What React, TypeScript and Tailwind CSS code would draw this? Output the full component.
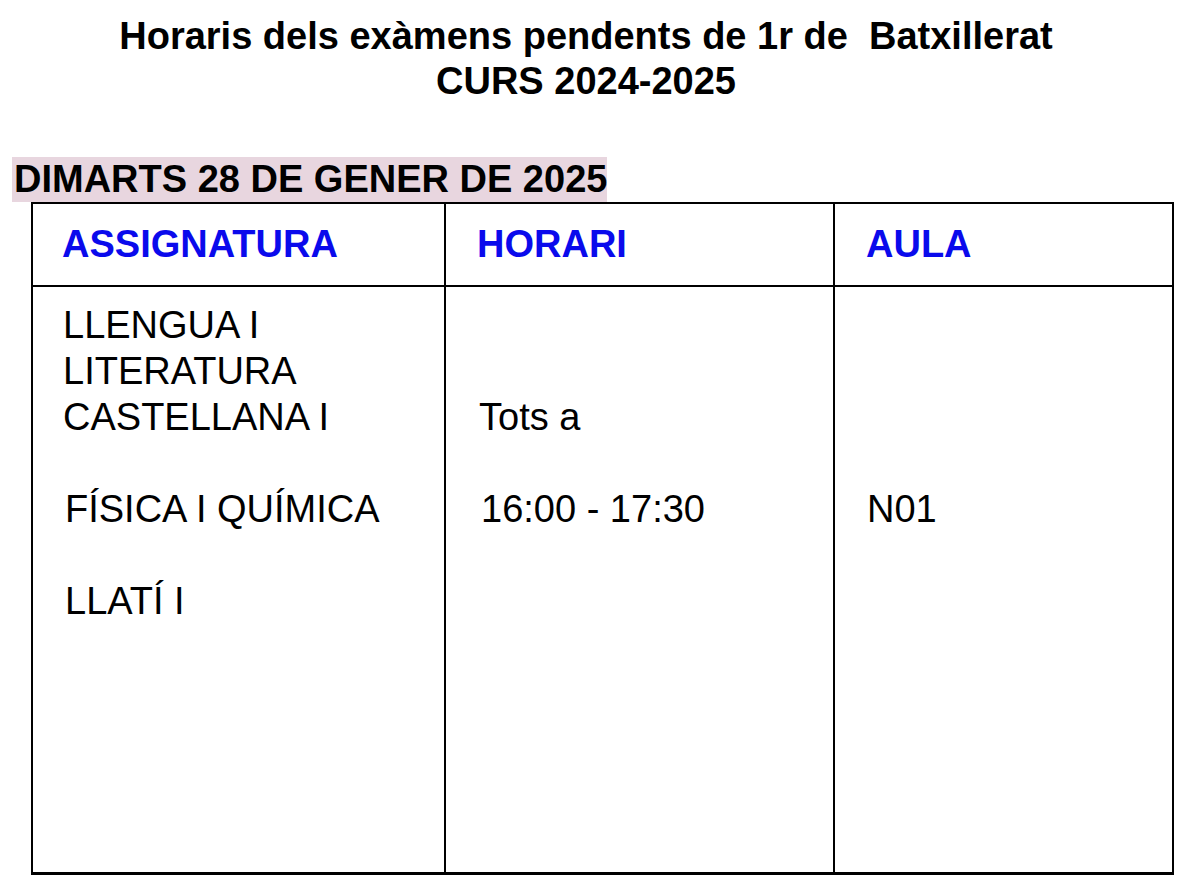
import React from "react";

export default function App() {
  const font = { fontFamily: '"Liberation Sans", Arial, sans-serif' };
  return (
    <div className="w-[1200px] h-[892px] bg-white text-black overflow-hidden" style={font}>
      <div className="w-[1172px] pt-[14px] text-center font-bold text-[38px] leading-[45px] whitespace-pre">
        <p>Horaris dels exàmens pendents de 1r de  Batxillerat</p>
        <p>CURS 2024-2025</p>
      </div>
      <div className="mt-[53px] pl-[12px] flex">
        <span className="bg-[#e8d6df] pl-[2px] font-bold text-[38px] leading-[45px]">
          DIMARTS 28 DE GENER DE 2025
        </span>
      </div>
      <div className="ml-[31px] w-[1143px] border-2 border-b-[3px] border-black">
        <div className="grid grid-cols-[411px_2px_387px_2px_1fr] h-[83px] border-b-2 border-black text-[#0a0aec] font-bold text-[38px]">
          <div className="flex items-center pl-[29px]">ASSIGNATURA</div>
          <div className="bg-black" />
          <div className="flex items-center pl-[31px]">HORARI</div>
          <div className="bg-black" />
          <div className="flex items-center pl-[31px]">AULA</div>
        </div>
        <div className="grid grid-cols-[411px_2px_387px_2px_1fr] h-[585px] text-[38px] leading-[46px]">
          <div className="pt-[15px] pl-[30px]">
            <p>LLENGUA I</p>
            <p>LITERATURA</p>
            <p>CASTELLANA I</p>
            <p>&nbsp;</p>
            <p className="pl-[2px]">FÍSICA I QUÍMICA</p>
            <p>&nbsp;</p>
            <p className="pl-[2px]">LLATÍ I</p>
          </div>
          <div className="bg-black" />
          <div className="pt-[15px] pl-[33px]">
            <p>&nbsp;</p>
            <p>&nbsp;</p>
            <p>Tots a</p>
            <p>&nbsp;</p>
            <p className="pl-[2px]">16:00 - 17:30</p>
          </div>
          <div className="bg-black" />
          <div className="pt-[15px] pl-[32px]">
            <p>&nbsp;</p>
            <p>&nbsp;</p>
            <p>&nbsp;</p>
            <p>&nbsp;</p>
            <p>N01</p>
          </div>
        </div>
      </div>
    </div>
  );
}
